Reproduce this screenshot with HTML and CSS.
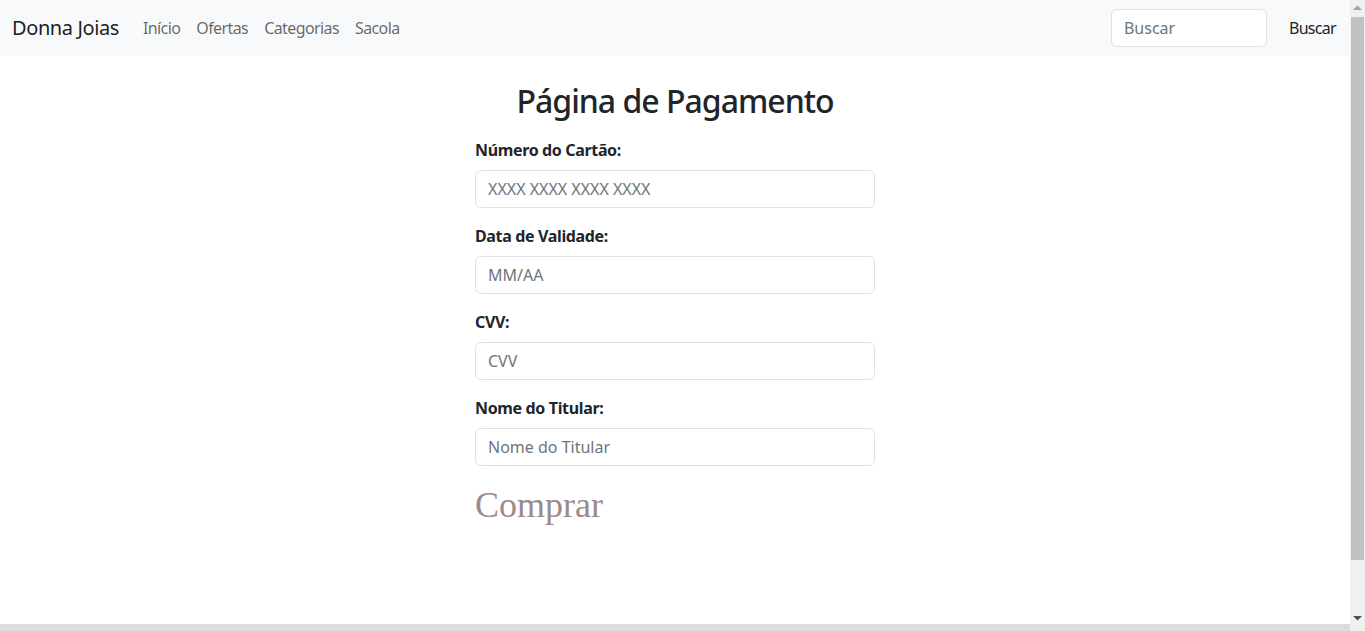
FILE: index.html
```html
<!DOCTYPE html>
<html lang="pt-BR">
<head>
<meta charset="utf-8">
<title>Donna Joias - Pagamento</title>
<link rel="stylesheet" href="styles.css">
</head>
<body>
<nav class="navbar">
  <div class="nav-left">
    <a class="brand" href="#">Donna Joias</a>
    <ul class="nav-links">
      <li><a href="#">Início</a></li>
      <li><a href="#">Ofertas</a></li>
      <li><a href="#">Categorias</a></li>
      <li><a href="#">Sacola</a></li>
    </ul>
  </div>
  <form class="search">
    <input class="search-input" type="search" placeholder="Buscar">
    <button class="search-btn" type="button">Buscar</button>
  </form>
</nav>
<main class="main">
  <h2 class="title">Página de Pagamento</h2>
  <form class="pay-form">
    <div class="group">
      <label class="label" for="card">Número do Cartão:</label>
      <input class="control" id="card" type="text" placeholder="XXXX XXXX XXXX XXXX">
    </div>
    <div class="group">
      <label class="label" for="exp">Data de Validade:</label>
      <input class="control" id="exp" type="text" placeholder="MM/AA">
    </div>
    <div class="group">
      <label class="label" for="cvv">CVV:</label>
      <input class="control" id="cvv" type="text" placeholder="CVV">
    </div>
    <div class="group">
      <label class="label" for="name">Nome do Titular:</label>
      <input class="control" id="name" type="text" placeholder="Nome do Titular">
    </div>
    <button class="buy" type="button">Comprar</button>
  </form>
</main>
<footer class="footer"></footer>
<div class="scrollbar" aria-hidden="true">
  <div class="sb-btn">
    <svg width="9" height="5" viewBox="0 0 9 5"><polygon points="0,5 4.5,0.5 9,5" fill="#a3a3a3"/></svg>
  </div>
  <div class="sb-track"><div class="sb-thumb"></div></div>
  <div class="sb-btn sb-down">
    <svg width="9" height="5" viewBox="0 0 9 5"><polygon points="0,0 9,0 4.5,4.5" fill="#505050"/></svg>
  </div>
</div>
</body>
</html>
```
FILE: styles.css
```css
* { box-sizing: border-box; }
html, body { margin: 0; padding: 0; }
body {
  font-family: "Segoe UI", "Noto Sans", "Open Sans", sans-serif;
  font-size: 16px;
  line-height: 1.5;
  color: #212529;
  background: #fff;
  letter-spacing: -0.35px;
  margin-right: 15px;
}
.scrollbar {
  position: fixed;
  top: 0;
  right: 0;
  width: 15px;
  height: 100vh;
  background: #f0f0f0;
  display: flex;
  flex-direction: column;
}
.sb-btn {
  height: 17px;
  display: flex;
  align-items: center;
  justify-content: center;
  padding-bottom: 2px;
}
.sb-btn svg { display: block; }
.sb-down { padding-bottom: 0; padding-top: 5px; height: 20px; align-items: flex-start; }
.sb-track { flex: 1; padding: 0 1px 0 1px; }
.sb-thumb { height: 543px; background: #c1c1c1; }
.navbar {
  display: flex;
  align-items: center;
  justify-content: space-between;
  height: 56px;
  padding: 0 1px 0 12px;
  background: #f8f9fa;
}
.nav-left { display: flex; align-items: center; }
.brand {
  font-size: 20px;
  color: rgba(0,0,0,.9);
  text-decoration: none;
  margin-right: 16px;
  letter-spacing: -0.4px;
}
.nav-links { display: flex; list-style: none; margin: 0; padding: 0; }
.nav-links a {
  display: block;
  padding: 8px 8px;
  color: rgba(0,0,0,.6);
  text-decoration: none;
  font-size: 16px;
  letter-spacing: -0.6px;
}
.search { display: flex; align-items: center; }
.search-input {
  width: 156px;
  height: 38px;
  padding: 6px 12px;
  font: inherit;
  font-size: 16px;
  border: 1px solid #dee2e6;
  border-radius: 6px;
  background: #fff;
  margin-right: 9px;
}
.search-input::placeholder { color: #6c757d; }
.search-btn {
  font: inherit;
  font-size: 16px;
  letter-spacing: -0.7px;
  color: #212529;
  background: transparent;
  border: 1px solid transparent;
  padding: 6px 12px;
  height: 38px;
}
.main {
  display: flex;
  flex-direction: column;
  align-items: center;
  min-height: 568px;
}
.title {
  font-size: 32px;
  font-weight: 500;
  line-height: 1.2;
  letter-spacing: -1px;
  margin: 26px 0 18px;
}
.pay-form { width: 400px; }
.group { margin-bottom: 16px; }
.label {
  display: block;
  font-weight: 700;
  margin-bottom: 8px;
}
.control {
  display: block;
  width: 100%;
  height: 38px;
  padding: 6px 12px;
  font: inherit;
  font-size: 16px;
  color: #212529;
  border: 1px solid #dee2e6;
  border-radius: 6px;
  background: #fff;
}
.control::placeholder { color: #6c757d; }
.buy {
  font-family: "Liberation Serif", "Times New Roman", serif;
  font-size: 36px;
  letter-spacing: 0;
  color: #9c8a8b;
  background: none;
  border: none;
  padding: 0;
  margin-top: 2px;
}
.footer {
  height: 71px;
  background: #dcdcdc;
}
```
